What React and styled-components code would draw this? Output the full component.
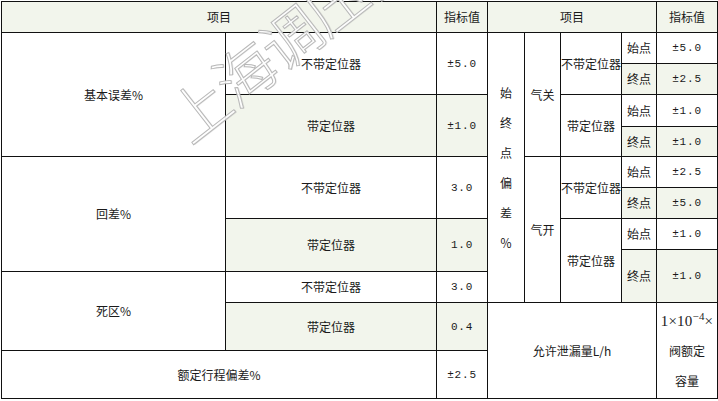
import React from "react";
import styled, { createGlobalStyle } from "styled-components";

const Global = createGlobalStyle`
  html, body { margin: 0; padding: 0; background: #fff; }
  body { font-family: "Noto Sans CJK SC", "Liberation Sans", sans-serif; overflow: hidden; }
`;

const Page = styled.div`
  position: relative;
  padding: 1px 0 0 1px;
`;

const Grid = styled.div`
  display: grid;
  width: max-content;
  grid-template-columns: 223px 210px 50px 36px 35px 60px 34px 60px;
  grid-template-rows: 30px 30px 30px 31px 29px 30px 30px 30px 21px 30px 47px 47px;
  gap: 1px;
  padding: 1px;
  background: #111;
`;

const Cell = styled.div`
  grid-column: ${(p) => p.$c} / span ${(p) => p.$cs || 1};
  grid-row: ${(p) => p.$r} / span ${(p) => p.$rs || 1};
  background: ${(p) => (p.$shade ? "#f2f5ec" : "#fff")};
  display: flex;
  flex-direction: column;
  align-items: center;
  justify-content: center;
  font-size: 12px;
  line-height: 14px;
  color: #1a1a1a;
  white-space: nowrap;
  overflow: hidden;
`;

const Num = styled.span`
  font-family: "Liberation Mono", "DejaVu Sans Mono", monospace;
  font-size: 11px;
  letter-spacing: 0.8px;
`;

const Stack = styled.div`
  display: flex;
  flex-direction: column;
  align-items: center;
  line-height: ${(p) => p.$lh || 30}px;
`;

const Formula = styled.span`
  font-family: "Liberation Serif", serif;
  font-size: 15px;
  letter-spacing: 0.2px;
  sup { font-size: 11px; vertical-align: 6px; line-height: 0; }
`;

const Watermark = styled.div`
  position: absolute;
  left: 174px;
  top: 95px;
  transform-origin: 0 50%;
  transform: rotate(-38deg);
  font-family: "Noto Sans CJK SC", sans-serif;
  font-size: 60px;
  line-height: 60px;
  font-weight: 300;
  letter-spacing: -2px;
  color: rgba(255, 255, 255, 0.9);
  -webkit-text-stroke: 1px #b8b8b8;
  text-shadow: 1px 1px 0 rgba(0, 0, 0, 0.08);
  white-space: nowrap;
  pointer-events: none;
`;

const Note = styled.p`
  margin: 1px 0 0 33px;
  font-size: 12px;
  color: #1a1a1a;
`;

// [content, col, row, colspan, rowspan, shaded]
const cells = [
  ["项目", 1, 1, 2, 1, true],
  ["指标值", 3, 1, 1, 1, true],
  ["项目", 4, 1, 4, 1, true],
  ["指标值", 8, 1, 1, 1, true],

  ["基本误差%", 1, 2, 1, 4],
  ["不带定位器", 2, 2, 1, 2],
  [<Num>±5.0</Num>, 3, 2, 1, 2],
  ["带定位器", 2, 4, 1, 2, true],
  [<Num>±1.0</Num>, 3, 4, 1, 2, true],
  ["回差%", 1, 6, 1, 4],
  ["不带定位器", 2, 6, 1, 2],
  [<Num>3.0</Num>, 3, 6, 1, 2],
  ["带定位器", 2, 8, 1, 2, true],
  [<Num>1.0</Num>, 3, 8, 1, 2, true],
  ["死区%", 1, 10, 1, 2],
  ["不带定位器", 2, 10],
  [<Num>3.0</Num>, 3, 10],
  ["带定位器", 2, 11, 1, 1, true],
  [<Num>0.4</Num>, 3, 11, 1, 1, true],
  ["额定行程偏差%", 1, 12, 2, 1],
  [<Num>±2.5</Num>, 3, 12],

  [
    <Stack>
      {["始", "终", "点", "偏", "差", "％"].map((ch, i) => (
        <span key={i}>{ch}</span>
      ))}
    </Stack>,
    4, 2, 1, 9,
  ],
  ["气关", 5, 2, 1, 4],
  ["不带定位器", 6, 2, 1, 2],
  ["始点", 7, 2],
  [<Num>±5.0</Num>, 8, 2],
  ["终点", 7, 3, 1, 1, true],
  [<Num>±2.5</Num>, 8, 3, 1, 1, true],
  ["带定位器", 6, 4, 1, 2],
  ["始点", 7, 4],
  [<Num>±1.0</Num>, 8, 4],
  ["终点", 7, 5, 1, 1, true],
  [<Num>±1.0</Num>, 8, 5, 1, 1, true],
  ["气开", 5, 6, 1, 5],
  ["不带定位器", 6, 6, 1, 2],
  ["始点", 7, 6],
  [<Num>±2.5</Num>, 8, 6],
  ["终点", 7, 7, 1, 1, true],
  [<Num>±5.0</Num>, 8, 7, 1, 1, true],
  ["带定位器", 6, 8, 1, 3],
  ["始点", 7, 8],
  [<Num>±1.0</Num>, 8, 8],
  ["终点", 7, 9, 1, 2, true],
  [<Num>±1.0</Num>, 8, 9, 1, 2, true],
  ["允许泄漏量L/h", 4, 11, 4, 2],
  [
    <Stack>
      <Formula>
        1×10<sup>−4</sup>×
      </Formula>
      <span>阀额定</span>
      <span>容量</span>
    </Stack>,
    8, 11, 1, 2,
  ],
];

export default function App() {
  return (
    <Page>
      <Global />
      <Grid>
        {cells.map(([content, c, r, cs, rs, shade], i) => (
          <Cell key={i} $c={c} $r={r} $cs={cs} $rs={rs} $shade={shade}>
            {content}
          </Cell>
        ))}
      </Grid>
      <Note>注：阀门属性</Note>
      <Watermark>上海调压器</Watermark>
    </Page>
  );
}
